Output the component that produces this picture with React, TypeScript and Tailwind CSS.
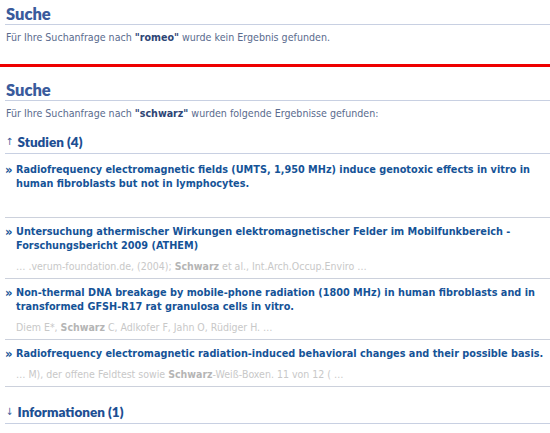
import React from "react";

const body = { fontFamily: '"DejaVu Sans Condensed", "DejaVu Sans", Tahoma, sans-serif', fontStretch: "condensed" as const };
const head = { fontFamily: 'Lato, "Open Sans", sans-serif' };

type Hit = { title: string[]; snippet?: React.ReactNode };

const hits: Hit[] = [
  {
    title: [
      "Radiofrequency electromagnetic fields (UMTS, 1,950 MHz) induce genotoxic effects in vitro in",
      "human fibroblasts but not in lymphocytes.",
    ],
    snippet: <span>&nbsp;</span>,
  },
  {
    title: [
      "Untersuchung athermischer Wirkungen elektromagnetischer Felder im Mobilfunkbereich -",
      "Forschungsbericht 2009 (ATHEM)",
    ],
    snippet: (
      <>
        … .verum-foundation.de, (2004); <b>Schwarz</b> et al., Int.Arch.Occup.Enviro …
      </>
    ),
  },
  {
    title: [
      "Non-thermal DNA breakage by mobile-phone radiation (1800 MHz) in human fibroblasts and in",
      "transformed GFSH-R17 rat granulosa cells in vitro.",
    ],
    snippet: (
      <>
        Diem E*, <b>Schwarz</b> C, Adlkofer F, Jahn O, Rüdiger H. …
      </>
    ),
  },
  {
    title: ["Radiofrequency electromagnetic radiation-induced behavioral changes and their possible basis."],
    snippet: (
      <>
        … M), der offene Feldtest sowie <b>Schwarz</b>-Weiß-Boxen. 11 von 12 ( …
      </>
    ),
  },
];

function PageTitle({ children }: { children: React.ReactNode }) {
  return (
    <h2
      style={head}
      className="ml-[5px] border-b border-[#c8d0e2] pl-px text-[16.5px] font-extrabold leading-[20px] text-[#3a5b9c]"
    >
      {children}
    </h2>
  );
}

function GroupTitle({ arrow, children }: { arrow: string; children: React.ReactNode }) {
  return (
    <h3
      style={head}
      className="ml-[5px] flex items-center border-b border-[#c8d0e2] pl-px text-[13.5px] font-extrabold leading-[22px] text-[#1d4f93]"
    >
      <span style={body} className="mr-[4px] text-[10px] font-normal text-[#3a5b9c]">
        {arrow}
      </span>
      {children}
    </h3>
  );
}

export default function App() {
  return (
    <div style={body} className="w-[550px] h-[433px] overflow-hidden bg-white">
      <section className="pt-[4px]">
        <PageTitle>Suche</PageTitle>
        <p className="mt-[5px] ml-[6px] text-[10.6px] leading-[14px] text-[#5a6b8e]">
          Für Ihre Suchanfrage nach <b className="text-[#2d4575]">"romeo"</b> wurde kein Ergebnis gefunden.
        </p>
      </section>

      <div className="mt-[20px] h-[3px] bg-[#ee0000]" />

      <section className="pt-[13px]">
        <PageTitle>Suche</PageTitle>
        <p className="mt-[5px] ml-[6px] text-[10.6px] leading-[14px] text-[#5a6b8e]">
          Für Ihre Suchanfrage nach <b className="text-[#2d4575]">"schwarz"</b> wurden folgende Ergebnisse gefunden:
        </p>

        <div className="mt-[11px]">
          <GroupTitle arrow="↑">Studien (4)</GroupTitle>
        </div>

        <ul className="ml-[5px]">
          {hits.map((h, i) => (
            <li
              key={i}
              className="border-b border-[#ccd1dc] pt-[7px] pb-[5px] first:pt-[9px] first:pb-[6px]"
            >
              <div className="flex text-[10.8px] font-bold leading-[14px] text-[#155397]">
                <span className="w-[11px] shrink-0 text-[13px] leading-[14px]">»</span>
                <span>
                  {h.title.map((t, j) => (
                    <span key={j} className="block whitespace-nowrap">
                      {t}
                    </span>
                  ))}
                </span>
              </div>
              <p className="mt-[6px] ml-[11px] text-[10.5px] leading-[14px] text-[#c8c8c8] [&_b]:text-[#b5b5b5]">
                {h.snippet}
              </p>
            </li>
          ))}
        </ul>

        <div className="mt-[14px]">
          <GroupTitle arrow="↓">Informationen (1)</GroupTitle>
        </div>
      </section>
    </div>
  );
}
